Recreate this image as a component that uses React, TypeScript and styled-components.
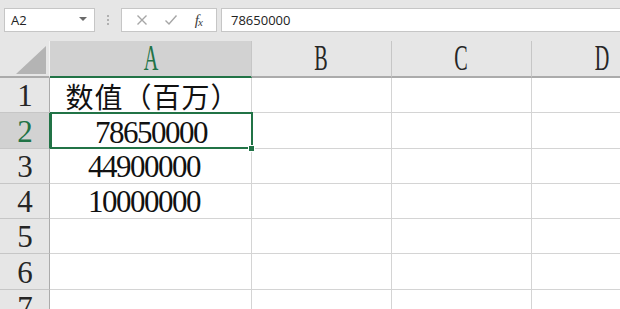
import React from 'react';
import styled, { createGlobalStyle, css } from 'styled-components';

const GlobalStyle = createGlobalStyle`
  html, body {
    margin: 0;
    padding: 0;
    background: #ffffff;
    overflow: hidden;
  }
`;

const Page = styled.div`
  width: 620px;
  height: 309px;
  overflow: hidden;
  display: flex;
  flex-direction: column;
  font-family: 'Liberation Serif', 'Noto Sans CJK SC', serif;
`;

const FormulaBar = styled.div`
  height: 41px;
  flex: none;
  background: #e6e6e6;
  display: flex;
  align-items: flex-start;
  padding-top: 8px;
  padding-left: 4px;
  box-sizing: border-box;
  font-family: 'Open Sans', 'Noto Sans', sans-serif;
  font-size: 13px;
  color: #222;
`;

const Box = styled.div<{ $width?: number }>`
  height: 24px;
  box-sizing: border-box;
  background: #fff;
  border: 1px solid #c6c6c6;
  display: flex;
  align-items: center;
  ${(p) => (p.$width ? css`width: ${p.$width}px;` : css`flex: 1;`)}
`;

const NameBox = styled(Box)`
  padding: 0 7px 0 6px;
  justify-content: space-between;
`;

const Caret = styled.span`
  width: 0;
  height: 0;
  border-left: 4px solid transparent;
  border-right: 4px solid transparent;
  border-top: 4px solid #6a6a6a;
  margin-top: -2px;
`;

const Grip = styled.div`
  width: 26px;
  height: 24px;
  display: flex;
  flex-direction: column;
  align-items: center;
  justify-content: center;
  gap: 2px;
  span {
    width: 2px;
    height: 2px;
    background: #b0b0b0;
  }
`;

const ButtonBox = styled(Box)`
  justify-content: space-around;
  padding: 0 6px;
  margin-right: 4px;
`;

const Fx = styled.span`
  font-family: 'Liberation Serif', serif;
  font-style: italic;
  font-size: 15px;
  color: #404040;
  letter-spacing: -1px;
  sub {
    font-size: 11px;
    vertical-align: -1px;
  }
`;

const FormulaInput = styled(Box)`
  padding-left: 9px;
  border-right: none;
`;

const Sheet = styled.div`
  display: grid;
  grid-template-columns: 50px 202px 140px 140px 140px;
  grid-template-rows: 37px 35px 36px 35px 35px 35px 36px 35px;
  background: #fff;
`;

const Corner = styled.div`
  background: #e6e6e6;
  border-right: 1px solid #f2f2f2;
  border-bottom: 2px solid #ababab;
  box-sizing: border-box;
  position: relative;
  &::after {
    content: '';
    position: absolute;
    right: 3px;
    bottom: 2px;
    width: 0;
    height: 0;
    border-left: 30px solid transparent;
    border-bottom: 28px solid #b4b4b4;
  }
`;

const ColHead = styled.div<{ $active?: boolean }>`
  box-sizing: border-box;
  background: ${(p) => (p.$active ? '#d2d2d2' : '#e6e6e6')};
  border-right: 1px solid #c6c6c6;
  border-bottom: 2px solid ${(p) => (p.$active ? '#217346' : '#ababab')};
  display: flex;
  align-items: center;
  justify-content: center;
  padding-bottom: 1px;
  color: ${(p) => (p.$active ? '#217346' : '#262626')};
  span {
    display: inline-block;
    font-size: 36px;
    line-height: 30px;
    height: 30px;
    transform: scaleX(0.56);
  }
`;

const RowHead = styled.div<{ $active?: boolean }>`
  box-sizing: border-box;
  background: ${(p) => (p.$active ? '#d2d2d2' : '#e6e6e6')};
  border-right: 1px solid ${(p) => (p.$active ? '#217346' : '#ababab')};
  border-bottom: 1px solid #c6c6c6;
  display: flex;
  align-items: center;
  justify-content: center;
  color: ${(p) => (p.$active ? '#217346' : '#262626')};
  font-size: 31px;
  letter-spacing: -1px;
  padding-top: 2px;
`;

const Cell = styled.div<{ $align?: 'center' | 'left'; $indent?: number }>`
  box-sizing: border-box;
  border-right: 1px solid #d4d4d4;
  border-bottom: 1px solid #d4d4d4;
  display: flex;
  align-items: flex-end;
  justify-content: ${(p) => (p.$align === 'left' ? 'flex-start' : 'center')};
  padding-left: ${(p) => p.$indent ?? 0}px;
  padding-bottom: 1px;
  font-size: 31px;
  line-height: 1;
  letter-spacing: -1.5px;
  color: #111;
  white-space: nowrap;
  overflow: visible;
`;

const CjkText = styled.span`
  font-family: 'Noto Sans CJK SC', sans-serif;
  font-size: 28px;
  letter-spacing: 1px;
  font-weight: 400;
  margin-bottom: 1px;
  margin-left: 4px;
`;

const Selected = styled(Cell)`
  position: relative;
  border: none;
  &::before {
    content: '';
    position: absolute;
    left: 0;
    top: -1px;
    right: -1px;
    bottom: 0;
    border: 2px solid #217346;
    pointer-events: none;
  }
  &::after {
    content: '';
    position: absolute;
    right: -3px;
    bottom: -3px;
    width: 5px;
    height: 5px;
    background: #217346;
    border: 1px solid #fff;
  }
`;

const XIcon = () => (
  <svg width="12" height="12" viewBox="0 0 12 12">
    <path d="M1.5 1.5 L10.5 10.5 M10.5 1.5 L1.5 10.5" stroke="#a6a6a6" strokeWidth="1.4" fill="none" />
  </svg>
);

const CheckIcon = () => (
  <svg width="14" height="12" viewBox="0 0 14 12">
    <path d="M1.5 6.5 L5 10 L12.5 1.5" stroke="#a6a6a6" strokeWidth="1.4" fill="none" />
  </svg>
);

const columns = ['A', 'B', 'C', 'D'];

const data: { text: string; align?: 'center' | 'left'; indent?: number; cjk?: boolean }[] = [
  { text: '数值（百万）', cjk: true },
  { text: '78650000' },
  { text: '44900000', align: 'left', indent: 38 },
  { text: '10000000', align: 'left', indent: 38 },
  { text: '' },
  { text: '' },
  { text: '' },
];

function App() {
  return (
    <Page>
      <GlobalStyle />
      <FormulaBar>
        <NameBox $width={91}>
          <span>A2</span>
          <Caret />
        </NameBox>
        <Grip>
          <span />
          <span />
          <span />
        </Grip>
        <ButtonBox $width={96}>
          <XIcon />
          <CheckIcon />
          <Fx>
            f<sub>x</sub>
          </Fx>
        </ButtonBox>
        <FormulaInput>78650000</FormulaInput>
      </FormulaBar>
      <Sheet>
        <Corner />
        {columns.map((c) => (
          <ColHead key={c} $active={c === 'A'}>
            <span>{c}</span>
          </ColHead>
        ))}
        {data.map((row, i) => {
          const n = i + 1;
          const active = n === 2;
          return (
            <React.Fragment key={n}>
              <RowHead $active={active}>{n}</RowHead>
              {active ? (
                <Selected>{row.text}</Selected>
              ) : (
                <Cell $align={row.align} $indent={row.indent}>
                  {row.cjk ? <CjkText>{row.text}</CjkText> : row.text}
                </Cell>
              )}
              <Cell />
              <Cell />
              <Cell />
            </React.Fragment>
          );
        })}
      </Sheet>
    </Page>
  );
}

export default App;
